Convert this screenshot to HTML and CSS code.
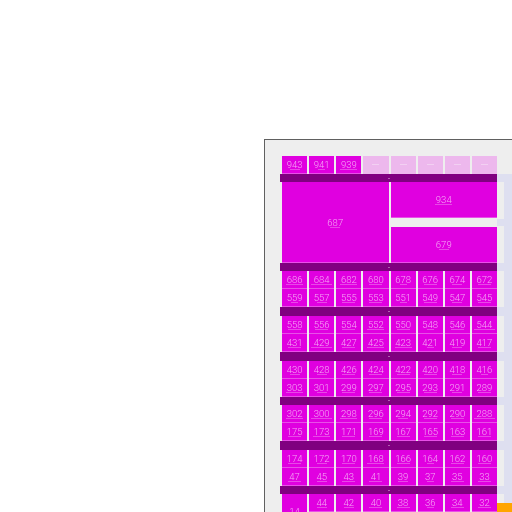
FILE: index.html
```html
<!DOCTYPE html>
<html lang="en">
<head>
  <meta charset="UTF-8" />
  <title>Seat map</title>
  <link rel="stylesheet" href="styles.css">
</head>
<body>
  <section class="panel">
    <!-- top row, last five are empty -->
    <div class="row row-top">
      <div class="cells">
        <div class="cell"><span class="num">943</span><i class="sub w10"></i></div>
        <div class="cell"><span class="num">941</span><i class="sub w7"></i></div>
        <div class="cell"><span class="num">939</span><i class="sub w17"></i></div>
        <div class="cell ghost"><i class="sub w7"></i></div>
        <div class="cell ghost"><i class="sub w7"></i></div>
        <div class="cell ghost"><i class="sub w7"></i></div>
        <div class="cell ghost"><i class="sub w7"></i></div>
        <div class="cell ghost"><i class="sub w7"></i></div>
      </div>
    </div>
    <div class="row"><div class="bar"><i class="dash"></i></div><div class="tail"></div></div>

    <!-- large block -->
    <div class="row">
      <div class="cells cells-big">
        <div class="cell big-left"><span class="num">687</span><i class="sub w10"></i></div>
        <div class="cell big-top"><span class="num">934</span><i class="sub w17"></i></div>
        <div class="cell big-bottom"><span class="num">679</span><i class="sub w10"></i></div>
      </div>
      <div class="side side-big"><div class="side-strip"></div></div>
    </div>
    <div class="row"><div class="bar"><i class="dash"></i></div><div class="tail"></div></div>

    <div class="row">
      <div class="cells">
        <div class="cell"><span class="num">686</span><i class="sub w17"></i></div>
        <div class="cell"><span class="num">684</span><i class="sub w21"></i></div>
        <div class="cell"><span class="num">682</span><i class="sub w17"></i></div>
        <div class="cell"><span class="num">680</span><i class="sub w13"></i></div>
        <div class="cell"><span class="num">678</span><i class="sub w7"></i></div>
        <div class="cell"><span class="num">676</span><i class="sub w13"></i></div>
        <div class="cell"><span class="num">674</span><i class="sub w10"></i></div>
        <div class="cell"><span class="num">672</span><i class="sub w13"></i></div>
        <div class="cell"><span class="num">559</span><i class="sub w7"></i></div>
        <div class="cell"><span class="num">557</span><i class="sub w10"></i></div>
        <div class="cell"><span class="num">555</span><i class="sub w13"></i></div>
        <div class="cell"><span class="num">553</span><i class="sub w13"></i></div>
        <div class="cell"><span class="num">551</span><i class="sub w7"></i></div>
        <div class="cell"><span class="num">549</span><i class="sub w13"></i></div>
        <div class="cell"><span class="num">547</span><i class="sub w10"></i></div>
        <div class="cell"><span class="num">545</span><i class="sub w13"></i></div>
      </div>
      <div class="side"></div>
    </div>
    <div class="row"><div class="bar"><i class="dash"></i></div><div class="tail"></div></div>

    <div class="row">
      <div class="cells">
        <div class="cell"><span class="num">558</span><i class="sub w13"></i></div>
        <div class="cell"><span class="num">556</span><i class="sub w13"></i></div>
        <div class="cell"><span class="num">554</span><i class="sub w13"></i></div>
        <div class="cell"><span class="num">552</span><i class="sub w17"></i></div>
        <div class="cell"><span class="num">550</span><i class="sub w13"></i></div>
        <div class="cell"><span class="num">548</span><i class="sub w7"></i></div>
        <div class="cell"><span class="num">546</span><i class="sub w13"></i></div>
        <div class="cell"><span class="num">544</span><i class="sub w21"></i></div>
        <div class="cell"><span class="num">431</span><i class="sub w13"></i></div>
        <div class="cell"><span class="num">429</span><i class="sub w21"></i></div>
        <div class="cell"><span class="num">427</span><i class="sub w13"></i></div>
        <div class="cell"><span class="num">425</span><i class="sub w17"></i></div>
        <div class="cell"><span class="num">423</span><i class="sub w17"></i></div>
        <div class="cell"><span class="num">421</span><i class="sub w7"></i></div>
        <div class="cell"><span class="num">419</span><i class="sub w10"></i></div>
        <div class="cell"><span class="num">417</span><i class="sub w13"></i></div>
      </div>
      <div class="side"></div>
    </div>
    <div class="row"><div class="bar"><i class="dash"></i></div><div class="tail"></div></div>

    <div class="row">
      <div class="cells">
        <div class="cell"><span class="num">430</span><i class="sub w10"></i></div>
        <div class="cell"><span class="num">428</span><i class="sub w10"></i></div>
        <div class="cell"><span class="num">426</span><i class="sub w13"></i></div>
        <div class="cell"><span class="num">424</span><i class="sub w13"></i></div>
        <div class="cell"><span class="num">422</span><i class="sub w13"></i></div>
        <div class="cell"><span class="num">420</span><i class="sub w13"></i></div>
        <div class="cell"><span class="num">418</span><i class="sub w10"></i></div>
        <div class="cell"><span class="num">416</span><i class="sub w7"></i></div>
        <div class="cell"><span class="num">303</span><i class="sub w17"></i></div>
        <div class="cell"><span class="num">301</span><i class="sub w10"></i></div>
        <div class="cell"><span class="num">299</span><i class="sub w13"></i></div>
        <div class="cell"><span class="num">297</span><i class="sub w13"></i></div>
        <div class="cell"><span class="num">295</span><i class="sub w13"></i></div>
        <div class="cell"><span class="num">293</span><i class="sub w13"></i></div>
        <div class="cell"><span class="num">291</span><i class="sub w10"></i></div>
        <div class="cell"><span class="num">289</span><i class="sub w13"></i></div>
      </div>
      <div class="side"></div>
    </div>
    <div class="row"><div class="bar"><i class="dash"></i></div><div class="tail"></div></div>

    <div class="row">
      <div class="cells">
        <div class="cell"><span class="num">302</span><i class="sub w17"></i></div>
        <div class="cell"><span class="num">300</span><i class="sub w21"></i></div>
        <div class="cell"><span class="num">298</span><i class="sub w17"></i></div>
        <div class="cell"><span class="num">296</span><i class="sub w13"></i></div>
        <div class="cell"><span class="num">294</span><i class="sub w10"></i></div>
        <div class="cell"><span class="num">292</span><i class="sub w13"></i></div>
        <div class="cell"><span class="num">290</span><i class="sub w13"></i></div>
        <div class="cell"><span class="num">288</span><i class="sub w21"></i></div>
        <div class="cell"><span class="num">175</span><i class="sub w13"></i></div>
        <div class="cell"><span class="num">173</span><i class="sub w17"></i></div>
        <div class="cell"><span class="num">171</span><i class="sub w13"></i></div>
        <div class="cell"><span class="num">169</span><i class="sub w13"></i></div>
        <div class="cell"><span class="num">167</span><i class="sub w13"></i></div>
        <div class="cell"><span class="num">165</span><i class="sub w13"></i></div>
        <div class="cell"><span class="num">163</span><i class="sub w13"></i></div>
        <div class="cell"><span class="num">161</span><i class="sub w13"></i></div>
      </div>
      <div class="side"></div>
    </div>
    <div class="row"><div class="bar"><i class="dash"></i></div><div class="tail"></div></div>

    <div class="row">
      <div class="cells">
        <div class="cell"><span class="num">174</span><i class="sub w13"></i></div>
        <div class="cell"><span class="num">172</span><i class="sub w10"></i></div>
        <div class="cell"><span class="num">170</span><i class="sub w13"></i></div>
        <div class="cell"><span class="num">168</span><i class="sub w17"></i></div>
        <div class="cell"><span class="num">166</span><i class="sub w13"></i></div>
        <div class="cell"><span class="num">164</span><i class="sub w7"></i></div>
        <div class="cell"><span class="num">162</span><i class="sub w13"></i></div>
        <div class="cell"><span class="num">160</span><i class="sub w13"></i></div>
        <div class="cell"><span class="num">47</span><i class="sub w13"></i></div>
        <div class="cell"><span class="num">45</span><i class="sub w10"></i></div>
        <div class="cell"><span class="num">43</span><i class="sub w13"></i></div>
        <div class="cell"><span class="num">41</span><i class="sub w13"></i></div>
        <div class="cell"><span class="num">39</span><i class="sub w10"></i></div>
        <div class="cell"><span class="num">37</span><i class="sub w7"></i></div>
        <div class="cell"><span class="num">35</span><i class="sub w13"></i></div>
        <div class="cell"><span class="num">33</span><i class="sub w13"></i></div>
      </div>
      <div class="side"></div>
    </div>
    <div class="row"><div class="bar"><i class="dash"></i></div><div class="tail"></div></div>

    <div class="row">
      <div class="cells">
        <div class="cell tall"><span class="num">14</span><i class="sub w10"></i></div>
        <div class="cell"><span class="num">44</span><i class="sub w10"></i></div>
        <div class="cell"><span class="num">42</span><i class="sub w10"></i></div>
        <div class="cell"><span class="num">40</span><i class="sub w13"></i></div>
        <div class="cell"><span class="num">38</span><i class="sub w13"></i></div>
        <div class="cell"><span class="num">36</span><i class="sub w7"></i></div>
        <div class="cell"><span class="num">34</span><i class="sub w13"></i></div>
        <div class="cell"><span class="num">32</span><i class="sub w13"></i></div>
      </div>
      <div class="side side-last"><div class="orange"></div></div>
    </div>
  </section>
</body>
</html>
```

FILE: styles.css
```css
html, body {
  margin: 0;
  height: 512px;
  overflow: hidden;
  background: white;
}
body {
  box-sizing: border-box;
  padding: 139px 0 0 264px;
  font-family: Roboto, sans-serif;
}
/* Panel, cut off by the window on the right and at the bottom */
.panel {
  box-sizing: border-box;
  width: 248px;
  height: 373px;
  overflow: hidden;
  padding: 15.5px 0 0 15px;
  background: #eeeeee;
  border-top: 1px solid #606060;
  border-left: 1px solid #606060;
  filter: blur(0.5px);
}
.row {
  display: flex;
}
/* Cells */
.cells {
  box-sizing: border-box;
  flex: none;
  width: 217px;
  padding-left: 2px;
  display: grid;
  grid-template-columns: repeat(8, 1fr);
  grid-auto-rows: 18px;
  column-gap: 2px;
}
.row-top .cells {
  grid-auto-rows: 18.4px;
}
.cells-big {
  grid-template-rows: 35.4px 9.6px 35.4px;
}
.cell {
  box-sizing: border-box;
  display: flex;
  flex-direction: column;
  align-items: center;
  justify-content: center;
  min-width: 0;
  background: #e000e0;
  border-bottom: 1px solid #e850e8;
  color: #f6a8f6;
}
.ghost {
  background: #edb8ed;
  border-bottom: none;
}
.ghost .sub {
  background: #f2d0f2;
  margin-top: -1px;
}
.big-left {
  grid-column: 1 / span 4;
  grid-row: 1 / span 3;
}
.big-top {
  grid-column: 5 / span 4;
  grid-row: 1;
}
.big-bottom {
  grid-column: 5 / span 4;
  grid-row: 3;
}
.tall {
  grid-row: span 2;
}
.num {
  font-size: 9.5px;
  font-weight: 300;
  line-height: 9px;
}
.sub {
  display: block;
  height: 1px;
  margin-bottom: -1px;
  background: #e848e8;
}
.w7 { width: 7px; }
.w10 { width: 10px; }
.w13 { width: 13px; }
.w17 { width: 17px; }
.w21 { width: 21px; }
/* Bars */
.bar {
  flex: none;
  width: 217px;
  height: 8.6px;
  background: #800080;
  display: flex;
  align-items: center;
  justify-content: center;
}
.dash {
  width: 2px;
  height: 1px;
  background: #b060b0;
}
/* Right side column */
.tail {
  flex: 1;
  background: #dedff0;
}
.side {
  flex: 1;
  position: relative;
  background: #dedff0;
  border-left: 7px solid #eeeeee;
}
.side-big {
  display: flex;
  flex-direction: column;
  padding-top: 37px;
}
.side-strip {
  height: 7px;
  margin-left: -7px;
  background: #dedff0;
}
/* Sits over the side column */
.orange {
  position: absolute;
  top: 9px;
  left: -7px;
  right: 0;
  height: 40px;
  background: #ffa500;
}
```
